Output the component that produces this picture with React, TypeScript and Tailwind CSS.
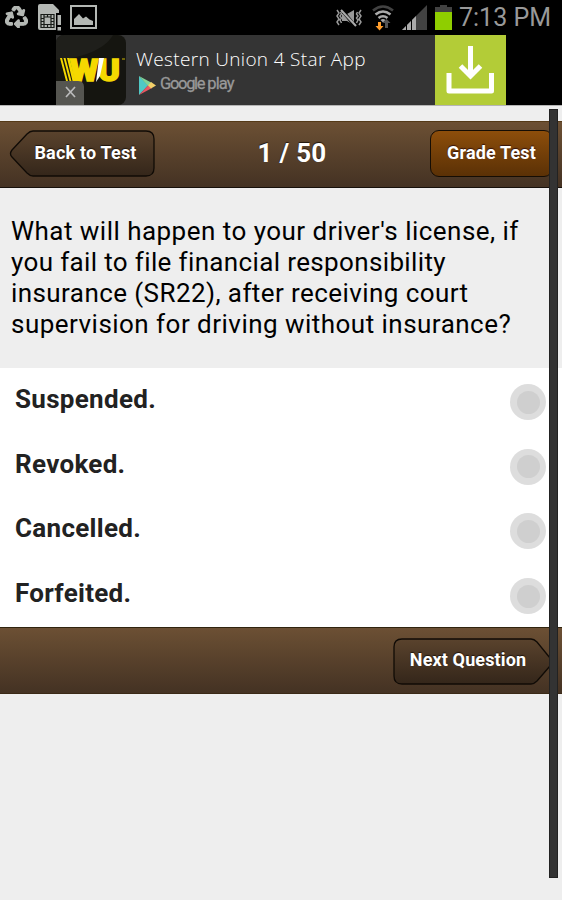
import { useState } from "react";
import { FaRecycle } from "react-icons/fa";

const answers = ["Suspended.", "Revoked.", "Cancelled.", "Forfeited."];

function StatusBar() {
  return (
    <div className="flex h-[35px] items-start bg-black text-[#b4b8b4]">
      <FaRecycle className="ml-[5px] mt-[6px] h-[22px] w-[23px]" stroke="currentColor" strokeWidth={28} />

      {/* SIM card warning */}
      <svg className="ml-[10px] mt-[3px]" width="24" height="28" viewBox="0 0 24 28">
        <path d="M2 1h13l6 6v8h-3v12H2a2 2 0 0 1-2-2V3a2 2 0 0 1 2-2z" fill="currentColor" />
        <path d="M3 11.500h13v13H3z M6 11.500v13 M13 11.500v13 M6 14h7 M6 21.500h7 M3 15.500h3 M3 18.500h3 M3 21.500h3 M13 15.500h3 M13 18.500h3 M13 21.500h3 M9.500 11.500V14 M9.500 21.500v3" fill="none" stroke="#171b17" strokeWidth="1.200" />
        <path d="M18 10h6v18h-6z" fill="#000" />
        <path d="M19.500 12h3.500v10h-3.500z M19.500 24h3.500v3.500h-3.500z" fill="currentColor" />
      </svg>

      {/* Screenshot saved */}
      <svg className="ml-[8px] mt-[5px]" width="27" height="24" viewBox="0 0 27 24">
        <rect x="1" y="1" width="25" height="22" fill="none" stroke="currentColor" strokeWidth="2" />
        <path d="M4 20v-6l5-5 4 4.500 3-2 3.500 3 3.500 1.500v4z" fill="currentColor" />
      </svg>

      <div className="ml-auto flex items-start">
        {/* Vibrate, muted */}
        <svg className="mt-[8px]" width="26" height="20" viewBox="0 0 26 20">
          <path d="M6 6h5l7-4v15l-7-4H6z" fill="#999" />
          <path d="M5 1l14 17" stroke="#000" strokeWidth="3.500" />
          <path d="M5 2l15 16" stroke="#aaa" strokeWidth="2" />
          <path d="M1 2l2 3-2 3 2 3-2 3 2 3 M4.500 4l1 2-1.500 2 1.500 2-1.500 2 1.500 3 M25 2l-2 3 2 3-2 3 2 3-2 3 M21.500 4l-1 2 1.500 2-1.500 2 1.500 2-1.500 3" fill="none" stroke="#999" strokeWidth="1.500" />
        </svg>
        {/* Wifi with data arrows */}
        <svg className="ml-[10px] mt-[5px]" width="23" height="26" viewBox="0 0 23 26">
          <g fill="none" strokeWidth="2.600">
            <path d="M1 5.500Q11 -2.500 21 5.500" stroke="#424242" />
            <path d="M3.500 9.500Q11 3.500 18.500 9.500" stroke="#aaa" />
            <path d="M6.500 13Q11 9.500 15.500 13" stroke="#aaa" />
          </g>
          <path d="M8.500 15Q11 13.200 13.500 15L11 17.500z" fill="#aaa" />
          <path d="M6 17h3v4h2.500L7.500 25.500 3.500 21H6z" fill="#ff9d2c" />
          <path d="M13 23v-5h-2.500l4-4 4 4H16v5z" fill="#555" />
        </svg>
        {/* Signal strength */}
        <svg className="ml-[7px] mt-[5px]" width="26" height="26" viewBox="0 0 26 26">
          <path d="M0 25L25 0v25z" fill="#424242" />
          <path d="M0 25l4-4v4z M5 20l4-4v9H5z M10 15l4-4v14h-4z" fill="#aaa" />
          <path d="M4.500 15v11 M9.500 12v14" stroke="#000" />
        </svg>
        <svg className="ml-[7px] mt-[5px]" width="18" height="26" viewBox="0 0 18 26">
          <path d="M0 2h5V0h7v2h5v5H0z" fill="#424242" />
          <path d="M0 7h17v18H0z" fill="#8fce00" />
        </svg>
        <span className="ml-[6px] mr-[10px] w-[93px] whitespace-nowrap text-[25px] leading-[35px] text-[#999]">
          7:13 PM
        </span>
      </div>
    </div>
  );
}

function AdBanner() {
  return (
    <div className="flex h-[71px] justify-center border-b border-[#b5b5b5] bg-black">
      <div className="flex h-[70px] w-[450px] bg-[#343434]">
        <svg width="71" height="70" viewBox="0 0 71 70">
          <rect width="70" height="70" rx="8" fill="#151510" />
          <path d="M8 0h49c-8 13-25 22-57 25V8a8 8 0 0 1 8-8z" fill="#1f1f1b" />
          <path d="M4 23h2l6 23h-2z M7.500 23h2l6 23h-2z M11 23h2.500l6 23h-3z" fill="#f5d800" />
          <text x="14" y="46" fontSize="31" fontWeight="900" textLength="50" lengthAdjust="spacingAndGlyphs" fill="#f5d800" stroke="#f5d800" strokeWidth="1.500">WU</text>
          <path d="M43 23h5l-4 18-4 6z" fill="#fff" />
          <path d="M66 24h3" stroke="#c9b400" />
          <path d="M0 46h22q6 0 6 6v18H0z" fill="#555550" />
          <path d="M10 52l9 10M19 52l-9 10" stroke="#bbb" strokeWidth="1.700" />
        </svg>
        <div className="ml-[9px] flex flex-1 flex-col">
          <div className="mt-[11px] whitespace-nowrap font-['Open_Sans'] text-[19px] font-light leading-[26px] tracking-[0.330px] text-white">
            Western Union 4 Star App
          </div>
          <div className="flex items-start">
            <svg className="ml-[2px] mt-[3px]" width="18" height="21" viewBox="0 0 18 21">
              <path d="M1 1v19l9-9.500z" fill="#50c8c5" />
              <path d="M1 1l13 7-4 3z" fill="#82d397" />
              <path d="M1 20l9-9.500 4 2.500z" fill="#e95763" />
              <path d="M13 7l5 3.500-5 3-3-3z" fill="#f3cf68" />
            </svg>
            <span className="ml-[4px] mt-[2px] flex gap-[3px] whitespace-nowrap text-[16.500px] leading-[20px] tracking-[-1.300px] text-[#999] [-webkit-text-stroke:0.300px_#999]">
              <span>Google</span>
              <span className="tracking-[-0.900px]">play</span>
            </span>
          </div>
        </div>
        <svg width="71" height="70" viewBox="0 0 71 70">
          <path d="M0 0h71v70H0z" fill="#b3cc37" />
          <path d="M35.500 11v30M25.500 31l10 10 10-10" fill="none" stroke="#fff" strokeWidth="5" />
          <path d="M14 38v18h42.500V38" fill="none" stroke="#fff" strokeWidth="5" strokeLinejoin="round" />
        </svg>
      </div>
    </div>
  );
}

// Pointed button, the shape is mirrored for the forward direction
function ArrowButton({ label, next = false }: { label: string; next?: boolean }) {
  const width = next ? 159 : 146;
  const shape = next
    ? "M9 1H138Q141 1 144 4L157 20Q160 24 157 28L144 43Q141 46 138 46H9Q1 46 1 38V9Q1 1 9 1Z"
    : "M24 1H137Q145 1 145 9V38Q145 46 137 46H24Q21 46 18 43L3 27Q0 24 3 20L18 4Q21 1 24 1Z";

  return (
    <button className="grid h-[47px] cursor-pointer place-items-center">
      <svg className="col-start-1 row-start-1" width={width} height="47" viewBox={`0 0 ${width} 47`}>
        <defs>
          <linearGradient id={next ? "next" : "back"} x1="0" y1="0" x2="0" y2="1">
            <stop stopColor="#5a432d" />
            <stop offset="1" stopColor="#34261a" />
          </linearGradient>
        </defs>
        <path d={shape} fill={next ? "url(#next)" : "url(#back)"} stroke="#100b06" strokeWidth="1.300" />
      </svg>
      <span
        className={`col-start-1 row-start-1 whitespace-nowrap text-[18px] font-bold leading-[20px] text-white [text-shadow:0_-1px_1px_#20150d] ${
          next ? "-ml-[9px] -mt-[3px] tracking-[0.120px]" : "ml-[7px] -mt-[2px] tracking-[0.180px]"
        }`}
      >
        {label}
      </span>
    </button>
  );
}

export default function App() {
  const [selected, setSelected] = useState<number | null>(null);

  return (
    <div className="relative h-[900px] w-[562px] overflow-hidden bg-[#eee] font-[Roboto,sans-serif] text-black">
      <StatusBar />
      <AdBanner />

      {/* Header */}
      <div className="mt-[15px] grid h-[67px] grid-cols-[155px_1fr_133px] border-b border-t border-b-[#17100b] border-t-[#553a18] bg-linear-to-b from-[#6c5034] to-[#443223] pt-[8px]">
        <div className="ml-[9px]">
          <ArrowButton label="Back to Test" />
        </div>
        <h1 className="pt-[9px] text-center text-[26px] font-bold leading-[28px] tracking-[0.300px] text-white [text-shadow:0_-1px_1px_#20150d]">
          1 / 50
        </h1>
        <button className="ml-[1px] h-[47px] w-[123px] cursor-pointer rounded-[9px] border border-[#150d04] bg-linear-to-b from-[#8d4e0b] to-[#5b3106] pb-[3px] text-[18px] font-bold tracking-[0.150px] text-white [text-shadow:0_-1px_1px_#35130d]">
          Grade Test
        </button>
      </div>

      {/* Question */}
      <div className="flex h-[180px] flex-col whitespace-nowrap px-[11px] pt-[28px] text-[26px] leading-[31px]">
        <span className="tracking-[0.470px]">What will happen to your driver's license, if</span>
        <span className="tracking-[0.360px]">you fail to file financial responsibility</span>
        <span className="tracking-[0.420px]">insurance (SR22), after receiving court</span>
        <span className="tracking-[0.470px]">supervision for driving without insurance?</span>
      </div>

      {/* Answers */}
      <div className="h-[259px] bg-white">
        {answers.map((answer, i) => (
          <button
            key={answer}
            onClick={() => setSelected(i)}
            className="flex h-[64.700px] w-full cursor-pointer items-start justify-between pl-[15px] pr-[16px] text-left"
          >
            <span className="mt-[16px] text-[26px] font-bold leading-[31px] tracking-[0.300px] text-[#222]">{answer}</span>
            <span className="mt-[16px] flex size-[36px] items-center justify-center rounded-full bg-[#ddd]">
              <span className={`size-[23px] rounded-full ${selected === i ? "bg-[#6c5034]" : "bg-[#cfcfcf]"}`} />
            </span>
          </button>
        ))}
      </div>

      {/* Footer */}
      <div className="flex h-[67px] justify-end border-b border-t border-b-[#3a2916] border-t-[#30240f] bg-linear-to-b from-[#6c5034] to-[#443223] pr-[10px] pt-[10px]">
        <ArrowButton label="Next Question" next />
      </div>

      {/* Scroll indicator over the page */}
      <div className="absolute left-[549px] top-[109px] h-[769px] w-[9px] border border-[#222] bg-[#333]" />
    </div>
  );
}
